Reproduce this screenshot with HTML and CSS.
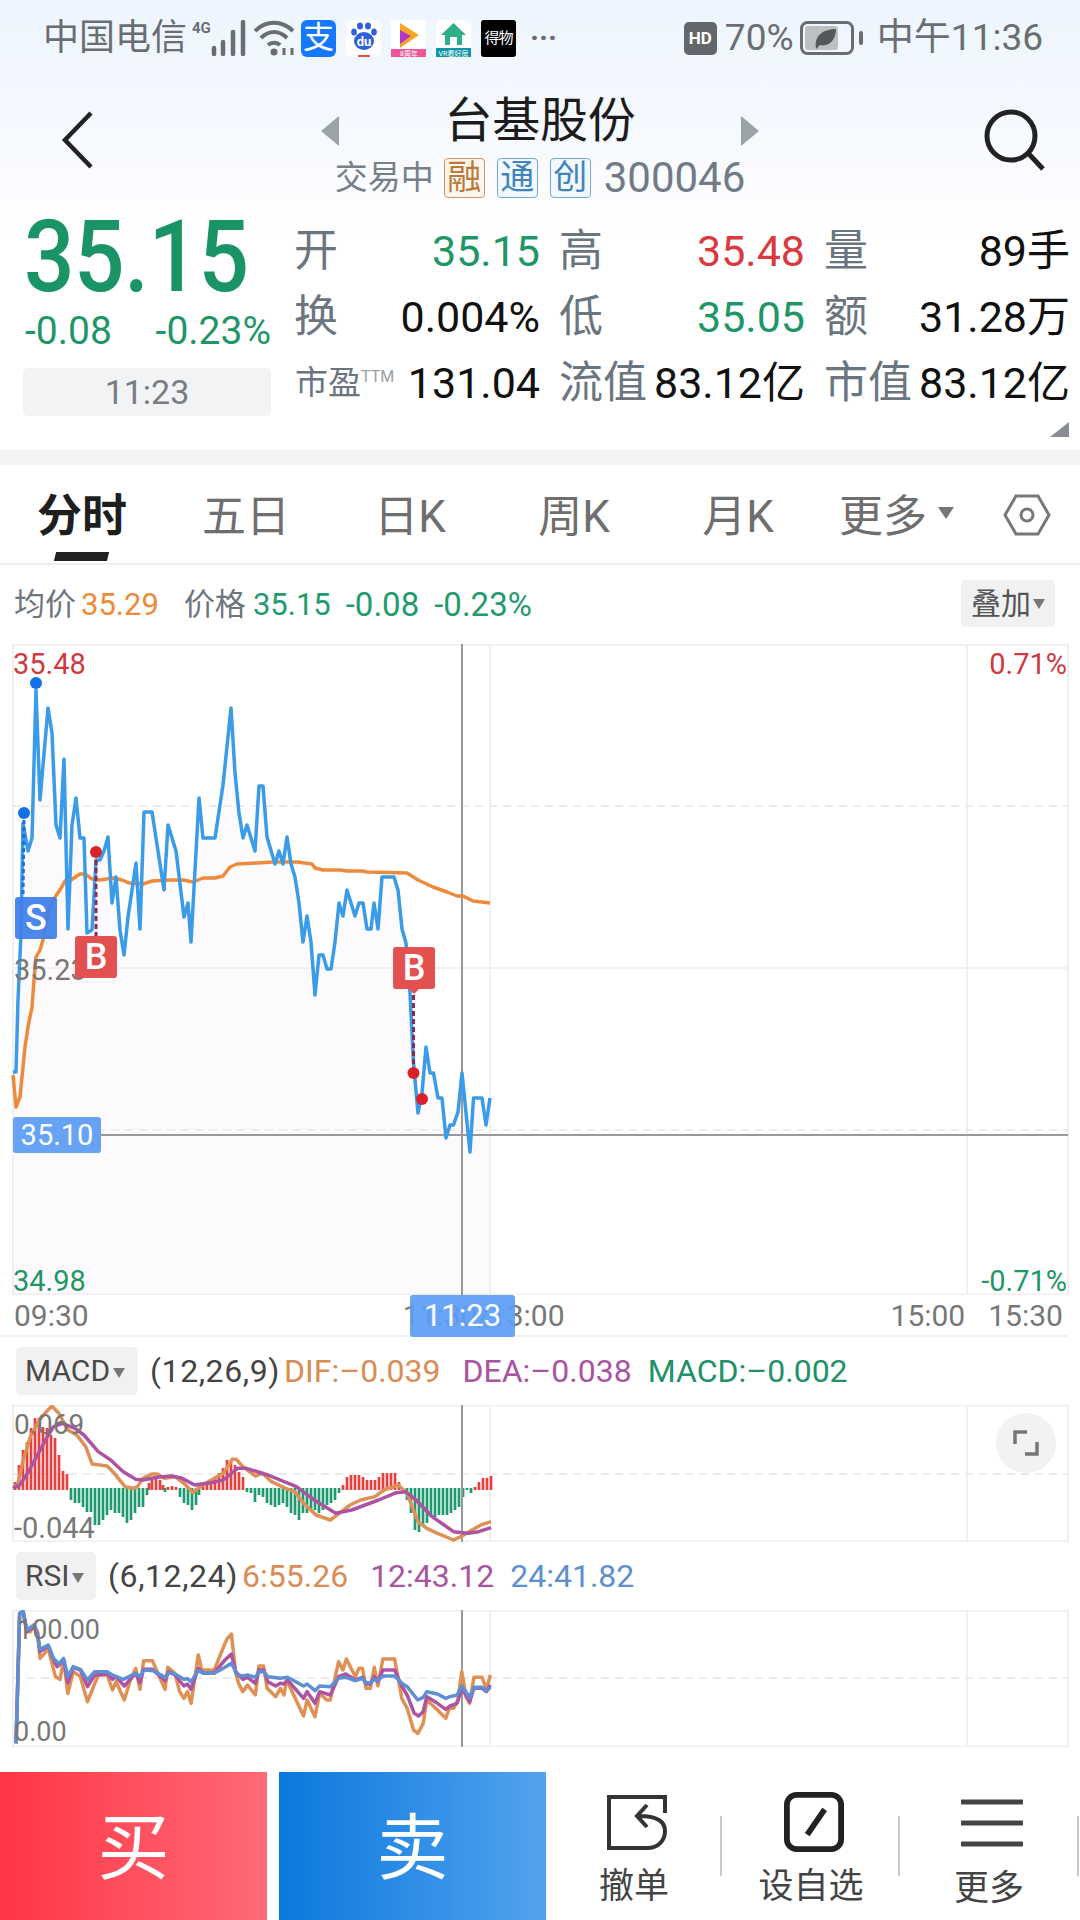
FILE: index.html
```html
<!DOCTYPE html>
<html lang="zh-CN">
<head>
<meta charset="utf-8">
<title>台基股份 300046</title>
<link rel="stylesheet" href="styles.css">
</head>
<body>
<div class="page">
  <div class="top">
    <div class="status">
      <span class="carrier">中国电信</span>
      <span class="net">4G</span>
      <svg class="signal" width="36" height="36" viewBox="0 0 36 36"><path d="M3 28v6M12 22v12M22 12v22M32 2v32"/></svg>
      <svg class="wifi" width="44" height="38" viewBox="0 0 42 38"><path d="M1 12C12 1 28 1 39 12M7 19C15 11 25 11 33 19M14 26C17 23 23 23 26 26"/><circle cx="20" cy="33" r="3.5"/><path class="wifi-tail" d="M30 36v-7M38 36v-7"/></svg>
      <span class="app app-ali">支</span>
      <svg class="app" width="35" height="37" viewBox="0 0 35 37"><rect class="app-bg" width="35" height="37" rx="6"/><ellipse class="du" cx="8" cy="12" rx="2.8" ry="3.5"/><ellipse class="du" cx="14" cy="6" rx="3" ry="3.6"/><ellipse class="du" cx="22" cy="6" rx="3" ry="3.6"/><ellipse class="du" cx="28" cy="12" rx="2.8" ry="3.5"/><ellipse class="du" cx="18" cy="21" rx="10" ry="9"/><text class="du-text" x="18" y="26">du</text><rect class="du-line" x="12" y="35" width="12" height="2"/></svg>
      <svg class="app" width="35" height="37" viewBox="0 0 35 37"><rect class="app-bg" width="35" height="37"/><path class="vid-a" d="M9 3L28 15L9 28Z"/><path class="vid-b" d="M9 10L20 16L9 24Z"/><rect class="vid-strip" y="29" width="35" height="8"/><text class="vid-text" x="18" y="36">8周年</text></svg>
      <svg class="app" width="35" height="37" viewBox="0 0 35 37"><rect class="app-bg" width="35" height="37" rx="6"/><path class="home" d="M17.500 3L30 15H26V25H9V15H5Z"/><rect class="home-door" x="14" y="17" width="7" height="8"/><rect class="home-strip" y="28" width="35" height="9"/><text class="home-text" x="17.500" y="35.500">VR看好房</text></svg>
      <span class="app app-dw">得物</span>
      <span class="dots">···</span>
      <span class="spacer"></span>
      <span class="hd">HD</span>
      <span class="pct">70%</span>
      <svg class="battery" width="64" height="34" viewBox="0 0 64 34"><rect class="bat-body" x="1.500" y="1.500" width="51" height="31" rx="6"/><rect class="bat-level" x="5" y="5" width="33" height="24" rx="3"/><path class="bat-leaf" d="M16 27C14 14 24 8 36 8C36 20 28 26 20 24L16 28Z"/><rect class="bat-cap" x="59" y="10" width="4" height="14" rx="2"/></svg>
      <span class="clock">中午11:36</span>
    </div>
    <div class="head">
      <svg class="back" width="36" height="60" viewBox="0 0 36 60"><path d="M31 3L5 30L31 57"/></svg>
      <div class="head-mid">
        <div class="title-row">
          <span class="tri tri-l"></span>
          <span class="title">台基股份</span>
          <span class="tri tri-r"></span>
        </div>
        <div class="sub-row">
          <span class="trade">交易中</span>
          <span class="tag tag-o">融</span>
          <span class="tag tag-b">通</span>
          <span class="tag tag-b">创</span>
          <span class="code">300046</span>
        </div>
      </div>
      <svg class="search" width="62" height="62" viewBox="0 0 62 62"><circle cx="27" cy="27" r="24"/><path d="M44 44L59 60"/></svg>
    </div>
    <div class="quote">
      <div class="quote-left">
        <div class="price">35.15</div>
        <div class="change"><span>-0.08</span><span>-0.23%</span></div>
        <div class="qtime">11:23</div>
      </div>
      <div class="quote-grid">
        <div class="cell"><span class="lab">开</span><span class="val green">35.15</span></div>
        <div class="cell"><span class="lab">高</span><span class="val red">35.48</span></div>
        <div class="cell"><span class="lab">量</span><span class="val">89手</span></div>
        <div class="cell"><span class="lab">换</span><span class="val">0.004%</span></div>
        <div class="cell"><span class="lab">低</span><span class="val green">35.05</span></div>
        <div class="cell"><span class="lab">额</span><span class="val">31.28万</span></div>
        <div class="cell"><span class="lab lab-s">市盈<sup class="ttm">TTM</sup></span><span class="val">131.04</span></div>
        <div class="cell"><span class="lab">流值</span><span class="val">83.12亿</span></div>
        <div class="cell"><span class="lab">市值</span><span class="val">83.12亿</span></div>
      </div>
      <span class="corner"></span>
    </div>
  </div>
  <div class="band"></div>
  <div class="tabs">
    <span class="tab tab-on">分时</span>
    <span class="tab">五日</span>
    <span class="tab">日K</span>
    <span class="tab">周K</span>
    <span class="tab">月K</span>
    <span class="tab tab-more">更多<i class="caret caret-tab"></i></span>
    <svg class="hex" width="48" height="42" viewBox="0 0 48 42"><path d="M13 2H35L46 21L35 40H13L2 21Z"/><circle cx="24" cy="21" r="6"/></svg>
  </div>
  <div class="legend">
    <span class="gray">均价</span><span class="orange">35.29</span>
    <span class="gray gap-l">价格</span><span class="lgreen">35.15</span>
    <span class="lgreen gap-m">-0.08</span>
    <span class="lgreen gap-m">-0.23%</span>
    <span class="spacer"></span>
    <span class="overlay-btn">叠加<i class="caret"></i></span>
  </div>

  <div class="plot plot-main">
    <svg class="chart" width="1080" height="651" viewBox="0 644 1080 651">
      <polygon class="area" points="13,1295 13,1072 16,1072 18,1000 21,933 23,823 28,851 32,838 36,690 40,800 48,708 52,733 56,825 60,838 64,759 68,929 72,825 76,798 80,838 84,838 87,933 92,930 96,860 104,851 108,837 112,903 116,877 120,930 124,955 128,917 136,863 140,929 144,812 152,812 164,890 168,825 176,851 184,917 188,903 191,942 199,798 203,838 215,838 223,785 231,708 235,773 239,813 243,838 247,825 255,851 259,786 263,786 267,837 275,864 279,851 283,864 287,837 291,864 295,877 299,903 303,942 307,916 311,942 315,995 319,955 323,955 327,969 331,969 335,942 339,903 343,916 347,890 355,916 359,903 363,903 367,929 371,929 374,903 378,929 382,877 394,877 398,890 402,929 406,943 410,993 413.500,1063 418,1113 422,1093 426,1047 430,1073 433.500,1073 438,1098 442,1098 446,1138 450,1125 453.500,1125 458,1112 462,1073 470,1152 473.500,1098 482,1098 486,1125 490,1098 490,1295"/>
      <rect class="frame" x="13" y="644.500" width="1055" height="650"/>
      <path class="grid" d="M490 644V1295M967 644V1295"/>
      <path class="dash" d="M13 806H1068M13 1130H1068"/>
      <path class="grid" d="M13 968H1068"/>
      <path class="cross" d="M462 644V1295M101 1135H1068"/>
      <polyline class="avg" points="13,1075 16,1107 20,1097 25,1047 28,1027 32,1007 34,980 36,957 40,950 43,940 48,910 55,897 60,890 65,881 71,880 80,874 85,874 92,879 100,880 113,878 122,880 129,883 143,884 152,881 170,880 183,880 193,882 203,878 215,878 223,876 230,867 237,864 257,863 273,862 297,862 312,864 315,868 323,870 340,870 347,871 363,871 367,872 407,873 418,880 433,887 447,892 457,896 463,896 473,901 490,903"/>
      <polyline class="price-line" points="13,1072 16,1072 18,1000 21,933 23,823 28,851 32,838 36,690 40,800 48,708 52,733 56,825 60,838 64,759 68,929 72,825 76,798 80,838 84,838 87,933 92,930 96,860 100,860 104,851 108,837 112,903 116,877 120,930 124,955 128,917 136,863 140,929 144,812 152,812 164,890 168,825 176,851 184,917 188,903 191,942 199,798 203,838 215,838 223,785 231,708 235,773 239,813 243,838 247,825 255,851 259,786 263,786 267,837 275,864 279,851 283,864 287,837 291,864 295,877 299,903 303,942 307,916 311,942 315,995 319,955 323,955 327,969 331,969 335,942 339,903 343,916 347,890 355,916 359,903 363,903 367,929 371,929 374,903 378,929 382,877 394,877 398,890 402,929 406,943 410,993 413.500,1063 418,1113 422,1093 426,1047 430,1073 433.500,1073 438,1098 442,1098 446,1138 450,1125 453.500,1125 458,1112 462,1073 470,1152 473.500,1098 482,1098 486,1125 490,1098"/>
      <path class="dash-blue" d="M24 820L23 897"/>
      <path class="dash-red" d="M96 860V936M413.500 995V1064"/>
      <circle class="dot-blue" cx="36" cy="683" r="6"/>
      <circle class="dot-blue" cx="24" cy="813" r="6"/>
      <circle class="dot-red" cx="96" cy="852" r="6"/>
      <circle class="dot-red" cx="413.500" cy="1073" r="6"/>
      <circle class="dot-red" cx="422" cy="1099" r="6"/>
    </svg>
    <span class="ax ax-hi">35.48</span>
    <span class="ax ax-hi-r">0.71%</span>
    <span class="ax ax-mid">35.23</span>
    <span class="ax ax-lo">34.98</span>
    <span class="ax ax-lo-r">-0.71%</span>
    <span class="badge badge-s">S</span>
    <span class="badge badge-b1">B</span>
    <span class="badge badge-b2">B</span>
    <span class="price-tag">35.10</span>
  </div>
  <div class="axis">
    <span class="t-a">09:30</span>
    <span class="t-b">11:30/13:00</span>
    <span class="t-c">15:00</span>
    <span class="t-d">15:30</span>
    <span class="time-tag">11:23</span>
  </div>

  <div class="ind-head">
    <span class="ind-btn ind-macd">MACD<i class="caret"></i></span>
    <span class="param">(12,26,9)</span><span class="c-o">DIF:–0.039</span><span class="c-p sp">DEA:–0.038</span><span class="c-g sp2">MACD:–0.002</span>
  </div>
  <div class="plot plot-ind">
    <svg class="chart" width="1080" height="137" viewBox="0 1405 1080 137">
      <rect class="frame" x="13" y="1405.500" width="1055" height="136"/>
      <path class="grid" d="M490 1405V1542M967 1405V1542"/>
      <path class="dash" d="M13 1474H1068"/>
      <path class="bars-r" d="M15 1490V1482M19 1490V1465M23 1490V1450M27 1490V1442M31 1490V1428M35 1490V1418M39 1490V1418M43 1490V1427M47 1490V1428M51 1490V1435M55 1490V1438M59 1490V1455M63 1490V1471M67 1490V1474M149 1490V1483M152 1490V1480M156 1490V1478M160 1490V1480M163 1490V1485M168 1490V1487M172 1490V1486M176 1490V1487M203 1490V1483M207 1490V1482M211 1490V1480M215 1490V1478M219 1490V1473M223 1490V1468M227 1490V1460M231 1490V1462M235 1490V1465M239 1490V1472M243 1490V1477M343 1490V1485M347 1490V1477M351 1490V1475M355 1490V1475M359 1490V1475M363 1490V1477M367 1490V1480M371 1490V1480M375 1490V1480M379 1490V1477M383 1490V1473M387 1490V1473M391 1490V1473M395 1490V1473M399 1490V1482M475 1490V1487M479 1490V1482M483 1490V1478M487 1490V1478M491 1490V1476"/>
      <path class="bars-g" d="M71 1488V1500M75 1488V1503M79 1488V1503M83 1488V1507M87 1488V1512M91 1488V1512M95 1488V1525M99 1488V1525M103 1488V1520M107 1488V1515M111 1488V1510M115 1488V1513M119 1488V1513M123 1488V1517M127 1488V1523M131 1488V1520M135 1488V1513M139 1488V1507M143 1488V1507M147 1488V1495M165 1488V1492M180 1488V1497M184 1488V1503M188 1488V1505M192 1488V1510M196 1488V1505M199 1488V1495M247 1488V1492M251 1488V1493M255 1488V1502M259 1488V1495M263 1488V1497M267 1488V1503M271 1488V1505M275 1488V1507M279 1488V1505M283 1488V1503M287 1488V1507M291 1488V1513M295 1488V1515M299 1488V1520M303 1488V1513M307 1488V1513M311 1488V1510M315 1488V1510M319 1488V1513M323 1488V1510M327 1488V1505M331 1488V1503M335 1488V1500M339 1488V1493M403 1488V1493M407 1488V1500M411 1488V1513M415 1488V1530M419 1488V1532M423 1488V1525M427 1488V1523M431 1488V1517M435 1488V1517M439 1488V1515M443 1488V1515M447 1488V1515M451 1488V1513M455 1488V1510M459 1488V1507M463 1488V1497M467 1488V1490M471 1488V1493"/>
      <path class="cross" d="M462 1405V1542"/>
      <g transform="translate(0 1340) scale(.35714 .33333)">
        <polyline class="ln ln-o" points="37,445 50,430 65,360 85,290 110,240 130,215 145,198 165,220 190,270 215,285 240,320 258,372 300,378 320,400 350,440 375,445 385,440 400,415 425,402 440,402 460,415 490,410 515,430 540,458 560,440 600,415 625,400 650,358 662,358 680,380 715,408 735,400 760,425 800,445 825,455 850,490 885,525 925,540 950,520 980,495 1010,480 1050,470 1075,450 1115,435 1140,460 1170,545 1195,565 1225,580 1270,600 1290,590 1330,565 1350,553 1375,545"/>
        <polyline class="ln ln-p" points="37,445 55,435 80,395 105,345 130,295 150,260 175,250 210,265 235,285 275,335 310,360 345,395 380,418 400,420 440,412 480,408 510,415 545,435 590,428 625,420 665,385 690,385 750,405 830,440 880,480 940,520 985,510 1060,480 1110,458 1135,455 1165,480 1210,530 1270,575 1310,580 1340,575 1375,563"/>
      </g>
    </svg>
    <span class="ax ax-m-hi">0.069</span>
    <span class="ax ax-m-lo">-0.044</span>
    <span class="expand"><svg width="26" height="26" viewBox="0 0 26 26"><path d="M2 14V2H14M24 12V24H12"/></svg></span>
  </div>

  <div class="ind-head">
    <span class="ind-btn ind-rsi">RSI<i class="caret"></i></span>
    <span class="param">(6,12,24)</span><span class="c-o">6:55.26</span><span class="c-p sp">12:43.12</span><span class="c-b sp2">24:41.82</span>
  </div>
  <div class="plot plot-ind">
    <svg class="chart" width="1080" height="137" viewBox="0 1610 1080 137">
      <rect class="frame" x="13" y="1610.500" width="1055" height="136"/>
      <path class="grid" d="M490 1610V1747M967 1610V1747"/>
      <path class="dash" d="M13 1678H1068"/>
      <path class="cross" d="M462 1610V1747"/>
      <g transform="translate(0 1560) scale(.35714 .33333)">
        <polyline class="ln ln-o" points="45,550 55,160 65,155 75,215 85,215 95,195 105,215 112,295 125,280 135,265 155,350 168,358 178,300 190,400 205,335 225,350 245,425 262,380 275,345 300,345 315,390 325,365 348,420 365,360 380,325 392,388 402,302 427,302 440,335 462,388 470,322 490,340 503,395 515,415 525,395 535,430 555,285 565,330 600,330 630,250 637,235 648,222 660,340 668,370 680,395 693,375 715,405 725,318 738,318 748,385 772,410 785,385 795,405 803,360 820,400 850,468 860,420 882,470 895,400 915,420 925,420 948,305 960,330 970,297 995,350 1005,325 1015,325 1025,385 1037,385 1048,322 1058,378 1072,297 1105,297 1125,415 1140,445 1158,510 1170,520 1185,490 1195,420 1225,450 1248,475 1258,445 1270,445 1282,420 1293,335 1305,410 1315,430 1327,352 1350,352 1362,388 1373,345"/>
        <polyline class="ln ln-p" points="45,550 55,160 65,155 75,215 95,200 105,220 112,275 135,258 150,300 160,320 178,300 190,368 205,322 225,330 245,380 265,345 300,342 315,358 325,350 348,378 380,340 392,368 402,328 427,328 462,362 472,335 490,345 515,378 525,372 535,388 555,325 570,340 600,338 630,300 648,282 660,335 680,358 693,352 715,370 725,330 738,330 750,365 772,378 785,370 795,372 805,360 850,415 860,395 882,430 895,395 925,405 948,350 968,342 995,360 1015,352 1025,372 1037,372 1048,350 1058,365 1072,330 1105,330 1125,378 1140,405 1160,460 1172,468 1185,455 1195,410 1225,430 1248,448 1260,438 1280,430 1293,385 1315,425 1327,385 1350,385 1362,395 1373,375"/>
        <polyline class="ln ln-b" points="45,550 55,160 65,155 75,210 95,195 105,225 112,268 135,255 150,295 165,312 178,295 190,350 205,320 225,328 245,360 265,335 300,335 315,345 345,358 380,340 392,350 402,330 430,332 462,352 472,338 490,342 515,358 525,356 535,365 555,332 570,340 600,340 630,322 648,310 665,345 680,348 693,345 715,352 725,335 738,335 750,350 785,355 805,352 850,378 860,372 882,392 895,378 925,380 948,355 968,352 995,362 1015,355 1025,368 1037,368 1048,358 1058,362 1072,348 1105,348 1125,370 1140,380 1170,420 1185,412 1195,395 1225,402 1248,415 1260,410 1280,405 1293,378 1315,412 1327,382 1350,382 1362,393 1373,382"/>
      </g>
    </svg>
    <span class="ax ax-r-hi">100.00</span>
    <span class="ax ax-r-lo">0.00</span>
  </div>

  <div class="bottom">
    <div class="trade-btn buy">买</div>
    <div class="trade-btn sell">卖</div>
    <div class="act act-1">
      <svg width="64" height="60" viewBox="0 0 64 60"><path d="M60 20V4H4V55H42C54 55 60 47 60 38C60 28 52 23 34 23M42 12L32 23L42 34"/></svg>
      <span>撤单</span>
    </div>
    <div class="act act-2">
      <svg width="62" height="62" viewBox="0 0 62 62"><rect class="act-box" x="3" y="3" width="56" height="56" rx="10"/><path class="act-slash" d="M42 18L24 44"/></svg>
      <span>设自选</span>
    </div>
    <div class="act act-3">
      <svg width="62" height="62" viewBox="0 0 62 62"><path d="M1 9H61M1 30H61M1 51H61"/></svg>
      <span>更多</span>
    </div>
    <i class="last-sep"></i>
  </div>
</div>
</body>
</html>
```
FILE: styles.css
```css
* { box-sizing: border-box; }
html, body { margin: 0; padding: 0; background: #fff; }
body { font-family: Roboto, "Noto Sans CJK SC", sans-serif; color: #111; }
.page { width: 1080px; height: 1920px; overflow: hidden; display: flex; flex-direction: column; }
.spacer { flex: 1; }
i { font-style: normal; display: inline-block; }

.top { height: 450px; background: linear-gradient(#eef5fe 0, #f6f9fe 130px, #fff 240px); display: flex; flex-direction: column; }

.status { height: 72px; padding: 4px 37px 0 43px; display: flex; align-items: center; color: #6a6e72; }
.carrier { font-size: 36px; line-height: 42px; width: 149px; white-space: nowrap; }
.net { font-size: 15px; font-weight: 700; margin: -20px 0 0 0; width: 20px; color: #6a6e72; }
.signal { margin: 0 0 0 -1px; }
.signal path { stroke: #6a6e72; stroke-width: 4.500; fill: none; stroke-linecap: round; }
.wifi { margin-left: 6px; }
.wifi path { stroke: #6a6e72; stroke-width: 4; fill: none; }
.wifi circle { fill: #6a6e72; }
.wifi .wifi-tail { stroke-width: 3; }
.app { width: 35px; height: 37px; margin-left: 10px; flex: none; }
.wifi + .app { margin-left: 4px; }
.app-ali { background: #1678ff; color: #fff; border-radius: 6px; font-size: 31px; line-height: 35px; text-align: center; }
.app-bg { fill: #fff; }
.du { fill: #2f5fdc; }
.du-text { fill: #fff; font-size: 13px; font-weight: 700; text-anchor: middle; }
.du-line { fill: #e2504f; }
.vid-a { fill: #f5a623; }
.vid-b { fill: #b335c9; }
.vid-strip { fill: #f0559a; }
.vid-text { fill: #fff; font-size: 7px; text-anchor: middle; }
.home { fill: #2fae8c; }
.home-door { fill: #fff; }
.home-strip { fill: #1294a5; }
.home-text { fill: #fff; font-size: 7px; text-anchor: middle; }
.app-dw { background: #000; color: #fff; border-radius: 3px; font-size: 15px; line-height: 37px; text-align: center; letter-spacing: -1px; white-space: nowrap; overflow: hidden; }
.dots { font-size: 30px; line-height: 30px; margin-left: 14px; letter-spacing: 0; color: #6a6e72; font-weight: 700; }
.hd { width: 33px; height: 33px; background: #63666a; border-radius: 5px; color: #fff; font-size: 17px; font-weight: 700; line-height: 33px; text-align: center; }
.pct { font-size: 37px; line-height: 40px; margin-left: 8px; width: 69px; white-space: nowrap; }
.battery { margin-left: 6px; }
.bat-body { fill: none; stroke: #6a6e72; stroke-width: 3; }
.bat-level { fill: #bdbfc1; }
.bat-leaf { fill: #55585b; }
.bat-cap { fill: #6a6e72; }
.clock { font-size: 37px; line-height: 40px; margin-left: 13px; white-space: nowrap; }

.head { height: 132px; position: relative; display: flex; justify-content: space-between; padding: 0 34px 0 60px; }
.back { margin-top: 38px; }
.back path { fill: none; stroke: #222; stroke-width: 4.500; }
.search { margin-top: 37px; }
.search circle, .search path { fill: none; stroke: #222; stroke-width: 5; }
.head-mid { position: absolute; left: 321px; top: 18px; width: 438px; display: flex; flex-direction: column; align-items: center; }
.title-row { width: 100%; height: 62px; display: flex; align-items: center; justify-content: space-between; }
.title { font-size: 48px; line-height: 62px; color: #1c1c1c; letter-spacing: -.2px; }
.tri { width: 0; height: 0; border-top: 15px solid transparent; border-bottom: 15px solid transparent; margin-top: 19px; }
.tri-l { border-right: 18px solid #9aa2aa; }
.tri-r { border-left: 18px solid #9aa2aa; }
.sub-row { display: flex; align-items: center; height: 42px; margin-top: 5px; color: #77808a; }
.trade { font-size: 33px; line-height: 40px; margin-right: 10px; white-space: nowrap; }
.tag { width: 41px; height: 40px; border: 1.500px solid; border-radius: 4px; font-size: 34px; line-height: 36px; text-align: center; margin-right: 12px; }
.tag-o { color: #b97a3c; border-color: #cf9562; background: #fdf6ef; }
.tag-b { color: #3f84bc; border-color: #73a8d2; background: #f2f8fd; }
.code { font-size: 42px; line-height: 42px; color: #707b86; margin-left: 1px; }

.quote { position: relative; flex: 1; display: flex; padding-top: 10px; }
.quote-left { width: 295px; padding: 0 24px 0 23px; display: flex; flex-direction: column; }
.price { font-size: 89px; line-height: 76px; margin-top: 5px; font-weight: 500; color: #1b9465; letter-spacing: -.5px; padding-left: 1px; transform: scaleY(1.13); transform-origin: left center; }
.change { display: flex; justify-content: space-between; font-size: 39px; line-height: 44px; color: #1f9668; margin-top: 14px; padding-left: 2px; }
.qtime { margin-top: 15px; height: 48px; background: #f2f3f5; border-radius: 5px; color: #7a7d80; font-size: 34px; line-height: 48px; text-align: center; }
.quote-grid { display: grid; grid-template-columns: repeat(3, 245px); grid-auto-rows: 66px; column-gap: 20px; width: 775px; margin-top: 4px; }
.cell { display: flex; justify-content: space-between; align-items: center; white-space: nowrap; }
.lab { font-size: 44px; color: #6b7580; line-height: 48px; margin-left: -1px; }
.lab-s { font-size: 33px; margin-left: 0; }
.ttm { font-size: 16px; line-height: 16px; color: #9aa0a6; vertical-align: 12px; }
.val { font-size: 43px; line-height: 48px; color: #111; }
.green { color: #1f9668; }
.red { color: #d83a3f; }
.corner { position: absolute; right: 11px; bottom: 13px; width: 0; height: 0; border-left: 19px solid transparent; border-bottom: 15px solid #888e94; }

.band { height: 15px; background: #f4f4f4; }

.tabs { height: 100px; border-bottom: 2px solid #eee; display: grid; grid-template-columns: repeat(5, 164px) 150px 110px; align-items: center; position: relative; }
.tab { font-size: 44px; line-height: 50px; color: #6e6e6e; text-align: center; margin-top: 5px; white-space: nowrap; }
.tab-on { color: #1e1e1e; font-weight: 700; position: relative; font-size: 45px; }
.tab-on::after { content: ""; position: absolute; left: 55px; top: 60px; width: 53px; height: 9px; background: #222; transform: skewX(-14deg); }
.tab-more { padding-left: 3px; }
.caret { width: 0; height: 0; border-left: 6px solid transparent; border-right: 6px solid transparent; border-top: 10px solid #777; margin-left: 6px; vertical-align: 5px; }
.caret-tab { margin-left: 11px; vertical-align: 13px; border-left-width: 8px; border-right-width: 8px; border-top-width: 12px; }
.hex { justify-self: center; margin-top: 2px; margin-left: 3px; }
.hex path, .hex circle { fill: none; stroke: #777; stroke-width: 3; }

.legend { height: 79px; display: flex; align-items: center; padding: 0 25px 0 14px; font-size: 31px; line-height: 36px; white-space: nowrap; }
.gray { color: #6e757c; }
.orange { color: #ee8a3a; margin-left: 5px; }
.lgreen { color: #239a6e; margin-left: 7px; }
.gap-l { margin-left: 25px; }
.lgreen.gap-m { margin-left: 15px; font-size: 33px; }
.overlay-btn { width: 94px; height: 47px; margin-top: -2px; background: #f1f1f1; border-radius: 5px; color: #555; font-size: 30px; line-height: 47px; text-align: center; white-space: nowrap; }
.overlay-btn .caret { margin-left: 2px; }

.plot { position: relative; }
.plot-main { height: 651px; }
.plot-ind { height: 137px; }
.chart { display: block; }
.frame { fill: none; stroke: #f0eef0; stroke-width: 2; }
.grid { stroke: #f1eff1; stroke-width: 2; fill: none; }
.dash { stroke: #ececec; stroke-width: 2; stroke-dasharray: 8 6; fill: none; }
.cross { stroke: #999; stroke-width: 2; fill: none; }
.area { fill: #fdfafd; }
.avg { fill: none; stroke: #ee8a3c; stroke-width: 3.500; stroke-linejoin: round; }
.price-line { fill: none; stroke: #3a9be8; stroke-width: 3.500; stroke-linejoin: round; }
.dash-blue { stroke: #1f6fd6; stroke-width: 3; stroke-dasharray: 4 3; fill: none; }
.dash-red { stroke: #8a2a55; stroke-width: 3; stroke-dasharray: 5 3; fill: none; }
.dot-blue { fill: #1271e6; }
.dot-red { fill: #d9212a; }
.bars-r { stroke: #e8403f; stroke-width: 2.700; fill: none; }
.bars-g { stroke: #1f9a6e; stroke-width: 2.700; fill: none; }
.ln { fill: none; stroke-width: 3.500; stroke-linejoin: round; vector-effect: non-scaling-stroke; }
.ln-o { stroke: #df9055; }
.ln-p { stroke: #ad53a2; }
.ln-b { stroke: #5f8fd3; }

.ax { position: absolute; font-size: 29px; line-height: 34px; color: #777; white-space: nowrap; }
.ax-hi { left: 13px; top: 3px; color: #d0393f; }
.ax-hi-r { right: 13px; top: 3px; color: #d0393f; }
.ax-mid { left: 14px; top: 309px; }
.ax-lo { left: 13px; top: 620px; color: #1f9668; }
.ax-lo-r { right: 13px; top: 620px; color: #1f9668; }
.badge { position: absolute; width: 42px; height: 42px; border-radius: 3px; color: #fff; font-size: 36px; font-weight: 500; line-height: 42px; text-align: center; }
.badge-s { left: 15px; top: 253px; background: #3f80ea; opacity: .93; }
.badge-b1 { left: 75px; top: 292px; background: #e2504f; }
.badge-b2 { left: 393px; top: 303px; background: #e2504f; }
.badge-b2::after { content: ""; position: absolute; left: 16px; top: 42px; width: 0; height: 0; border-left: 5px solid transparent; border-right: 5px solid transparent; border-top: 5px solid #e2504f; }
.price-tag { position: absolute; left: 13px; top: 473px; width: 88px; height: 36px; border-radius: 3px; background: #66a3f5; color: #fff; font-size: 29px; line-height: 36px; text-align: center; }

.axis { height: 42px; position: relative; display: flex; align-items: center; font-size: 30px; color: #777; border-bottom: 2px solid #f0f0f0; white-space: nowrap; margin: 0 12px 0 0; }
.t-a { margin-left: 14px; }
.t-b { margin-left: 314px; }
.t-c { margin-left: 326px; }
.t-d { margin-left: 23px; }
.time-tag { position: absolute; left: 410px; top: 0; width: 105px; height: 42px; background: rgba(92, 157, 245, .92); border-radius: 3px; color: #fff; font-size: 31px; line-height: 42px; text-align: center; }

.ind-head { height: 68px; display: flex; align-items: center; padding: 0 0 0 16px; font-size: 32px; line-height: 38px; white-space: nowrap; }
.ind-btn { height: 48px; background: #f1f1f1; border-radius: 5px; color: #4a4a4a; font-size: 30px; line-height: 48px; padding: 0 4px 0 9px; margin-right: 12px; white-space: nowrap; }
.ind-macd { width: 122px; }
.ind-rsi { width: 80px; }
.ind-btn .caret { margin-left: 3px; vertical-align: 3px; }
.param { color: #444; letter-spacing: .6px; }
.c-o { color: #d98c55; margin-left: 4px; }
.c-p { color: #a954a0; }
.c-g { color: #22906a; }
.c-b { color: #5e8fcf; }
.sp { margin-left: 22px; }
.sp2 { margin-left: 16px; }

.ax-m-hi { left: 14px; top: 3px; font-size: 28px; }
.ax-m-lo { left: 14px; top: 106px; font-size: 29px; }
.ax-r-hi { left: 17px; top: 3px; font-size: 27px; }
.ax-r-lo { left: 14px; top: 105px; font-size: 27px; }
.expand { position: absolute; left: 996px; top: 8px; width: 60px; height: 60px; border-radius: 50%; background: #f2f2f2; display: flex; align-items: center; justify-content: center; }
.expand path { fill: none; stroke: #777; stroke-width: 3.500; }

.bottom { margin-top: 25px; height: 148px; display: flex; position: relative; background: #fff; }
.trade-btn { width: 267px; color: #fff; font-size: 72px; line-height: 154px; text-align: center; }
.buy { background: linear-gradient(90deg, #ff3544, #ff6a77); }
.sell { margin-left: 12px; background: linear-gradient(90deg, #0a78dc, #53a3ef); }
.act { position: relative; width: 177px; display: flex; flex-direction: column; align-items: center; padding-top: 21px; color: #444; font-size: 35px; line-height: 40px; white-space: nowrap; }
.act span { margin-top: 14px; }
.act svg { position: relative; left: 3px; }
.act svg path { fill: none; stroke: #333; stroke-width: 4; }
.act-1 { width: 176px; }
.act-2 { width: 178px; }
.act-3 { width: 178px; }
.act-2 svg { margin-top: -1px; height: 60px; }
.act-2 span { margin-top: 15px; }
.act-2 .act-box { fill: none; stroke: #222; stroke-width: 6; }
.act-2 .act-slash { stroke: #222; stroke-width: 6; }
.act-3 svg path { stroke: #444; stroke-width: 5; stroke-linecap: round; }
.act-1::after, .act-2::after { content: ""; position: absolute; right: 0; top: 44px; width: 2px; height: 60px; background: #c8c8c8; }
.last-sep { position: absolute; right: 1px; top: 44px; width: 2px; height: 60px; background: #c8c8c8; }
```
